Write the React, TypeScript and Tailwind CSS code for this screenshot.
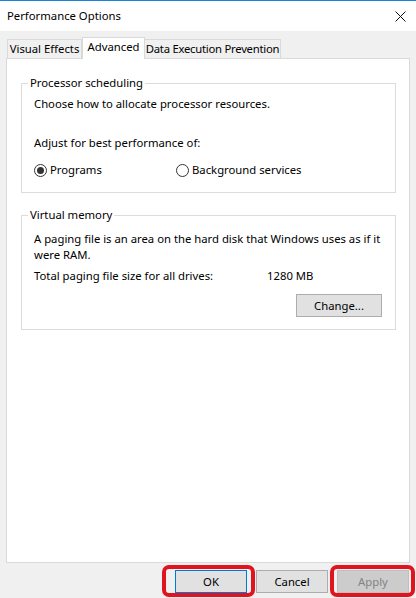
import React from "react";

function Radio({ checked, label }: { checked?: boolean; label: string }) {
  return (
    <div className="flex items-center">
      <span className="w-[13px] h-[13px] rounded-full border border-[#333333] bg-white flex items-center justify-center">
        {checked && <span className="w-[7px] h-[7px] rounded-full bg-[#333333]" />}
      </span>
      <span className="ml-[3px]">{label}</span>
    </div>
  );
}

function Btn({ children, cls }: { children: React.ReactNode; cls: string }) {
  return (
    <div className={"h-[23px] w-[72px] flex items-center justify-center border " + cls}>{children}</div>
  );
}

export default function App() {
  return (
    <div className="w-[416px] h-[598px] overflow-hidden bg-[#f0f0f0] font-['Noto_Sans',sans-serif] text-[11.3px] leading-[16px] text-black flex flex-col">
      <div className="h-[31px] shrink-0 bg-white border-t border-[#1883d7] flex items-center justify-between pl-[7px] pr-[10px]">
        <span>Performance Options</span>
        <svg width="11" height="11" viewBox="0 0 11 11">
          <path d="M0.5 0.5 L10.5 10.5 M10.5 0.5 L0.5 10.5" stroke="#111" strokeWidth="1" fill="none" />
        </svg>
      </div>
      <div className="pt-[6px] px-[6px] flex flex-col">
        <div className="flex items-end pl-[1px] relative z-10 whitespace-nowrap">
          <div className="h-[20px] w-[75px] border border-[#d9d9d9] flex items-center justify-center -mb-px">Visual Effects</div>
          <div className="h-[22px] w-[63px] border border-b-0 border-[#d9d9d9] bg-white flex items-start justify-center pt-[1px] -mb-px">Advanced</div>
          <div className="h-[20px] w-[137px] border border-[#d9d9d9] -ml-px flex items-center justify-center -mb-px tracking-[-0.25px]">Data Execution Prevention</div>
        </div>
        <div className="h-[505px] bg-white border border-[#d9d9d9] pt-[16px] pl-[14px] pr-[13px] flex flex-col">
          <fieldset className="min-w-0 border border-[#dcdcdc] pl-[12px] pr-[13px] pb-[14px]">
            <legend className="-ml-[6px] px-[2px]">Processor scheduling</legend>
            <div className="mt-[5px]">Choose how to allocate processor resources.</div>
            <div className="mt-[23px]">Adjust for best performance of:</div>
            <div className="mt-[11px] flex items-center">
              <div className="w-[142px]">
                <Radio checked label="Programs" />
              </div>
              <Radio label="Background services" />
            </div>
          </fieldset>
          <fieldset className="min-w-0 mt-[14px] border border-[#dcdcdc] pl-[12px] pr-[13px] pb-[12px]">
            <legend className="-ml-[6px] px-[2px]">Virtual memory</legend>
            <div className="mt-[8px]">
              <div className="whitespace-nowrap">A paging file is an area on the hard disk that Windows uses as if it</div>
              <div>were RAM.</div>
            </div>
            <div className="mt-[5px] flex">
              <span className="w-[233px]">Total paging file size for all drives:</span>
              <span>1280 MB</span>
            </div>
            <div className="mt-[10px] flex justify-end">
              <div className="h-[23px] w-[86px] flex items-center justify-center border border-[#adadad] bg-[#e1e1e1]">Change...</div>
            </div>
          </fieldset>
        </div>
      </div>
      <div className="pt-[7px] pr-[7px] flex justify-end gap-[9px]">
        <div className="relative">
          <Btn cls="border-[#0078d7] bg-[#e1e1e1]">OK</Btn>
          <div className="absolute -left-[13px] -right-[8px] -top-[5px] -bottom-[4px] border-[4px] border-[#e0141e] rounded-[7px] pointer-events-none" />
        </div>
        <Btn cls="border-[#adadad] bg-[#e1e1e1]">Cancel</Btn>
        <div className="relative">
          <Btn cls="border-[#bfbfbf] bg-[#cccccc] text-[#838383]">Apply</Btn>
          <div className="absolute -left-[7px] -right-[6px] -top-[5px] -bottom-[4px] border-[4px] border-[#e0141e] rounded-[7px] pointer-events-none" />
        </div>
      </div>
    </div>
  );
}
